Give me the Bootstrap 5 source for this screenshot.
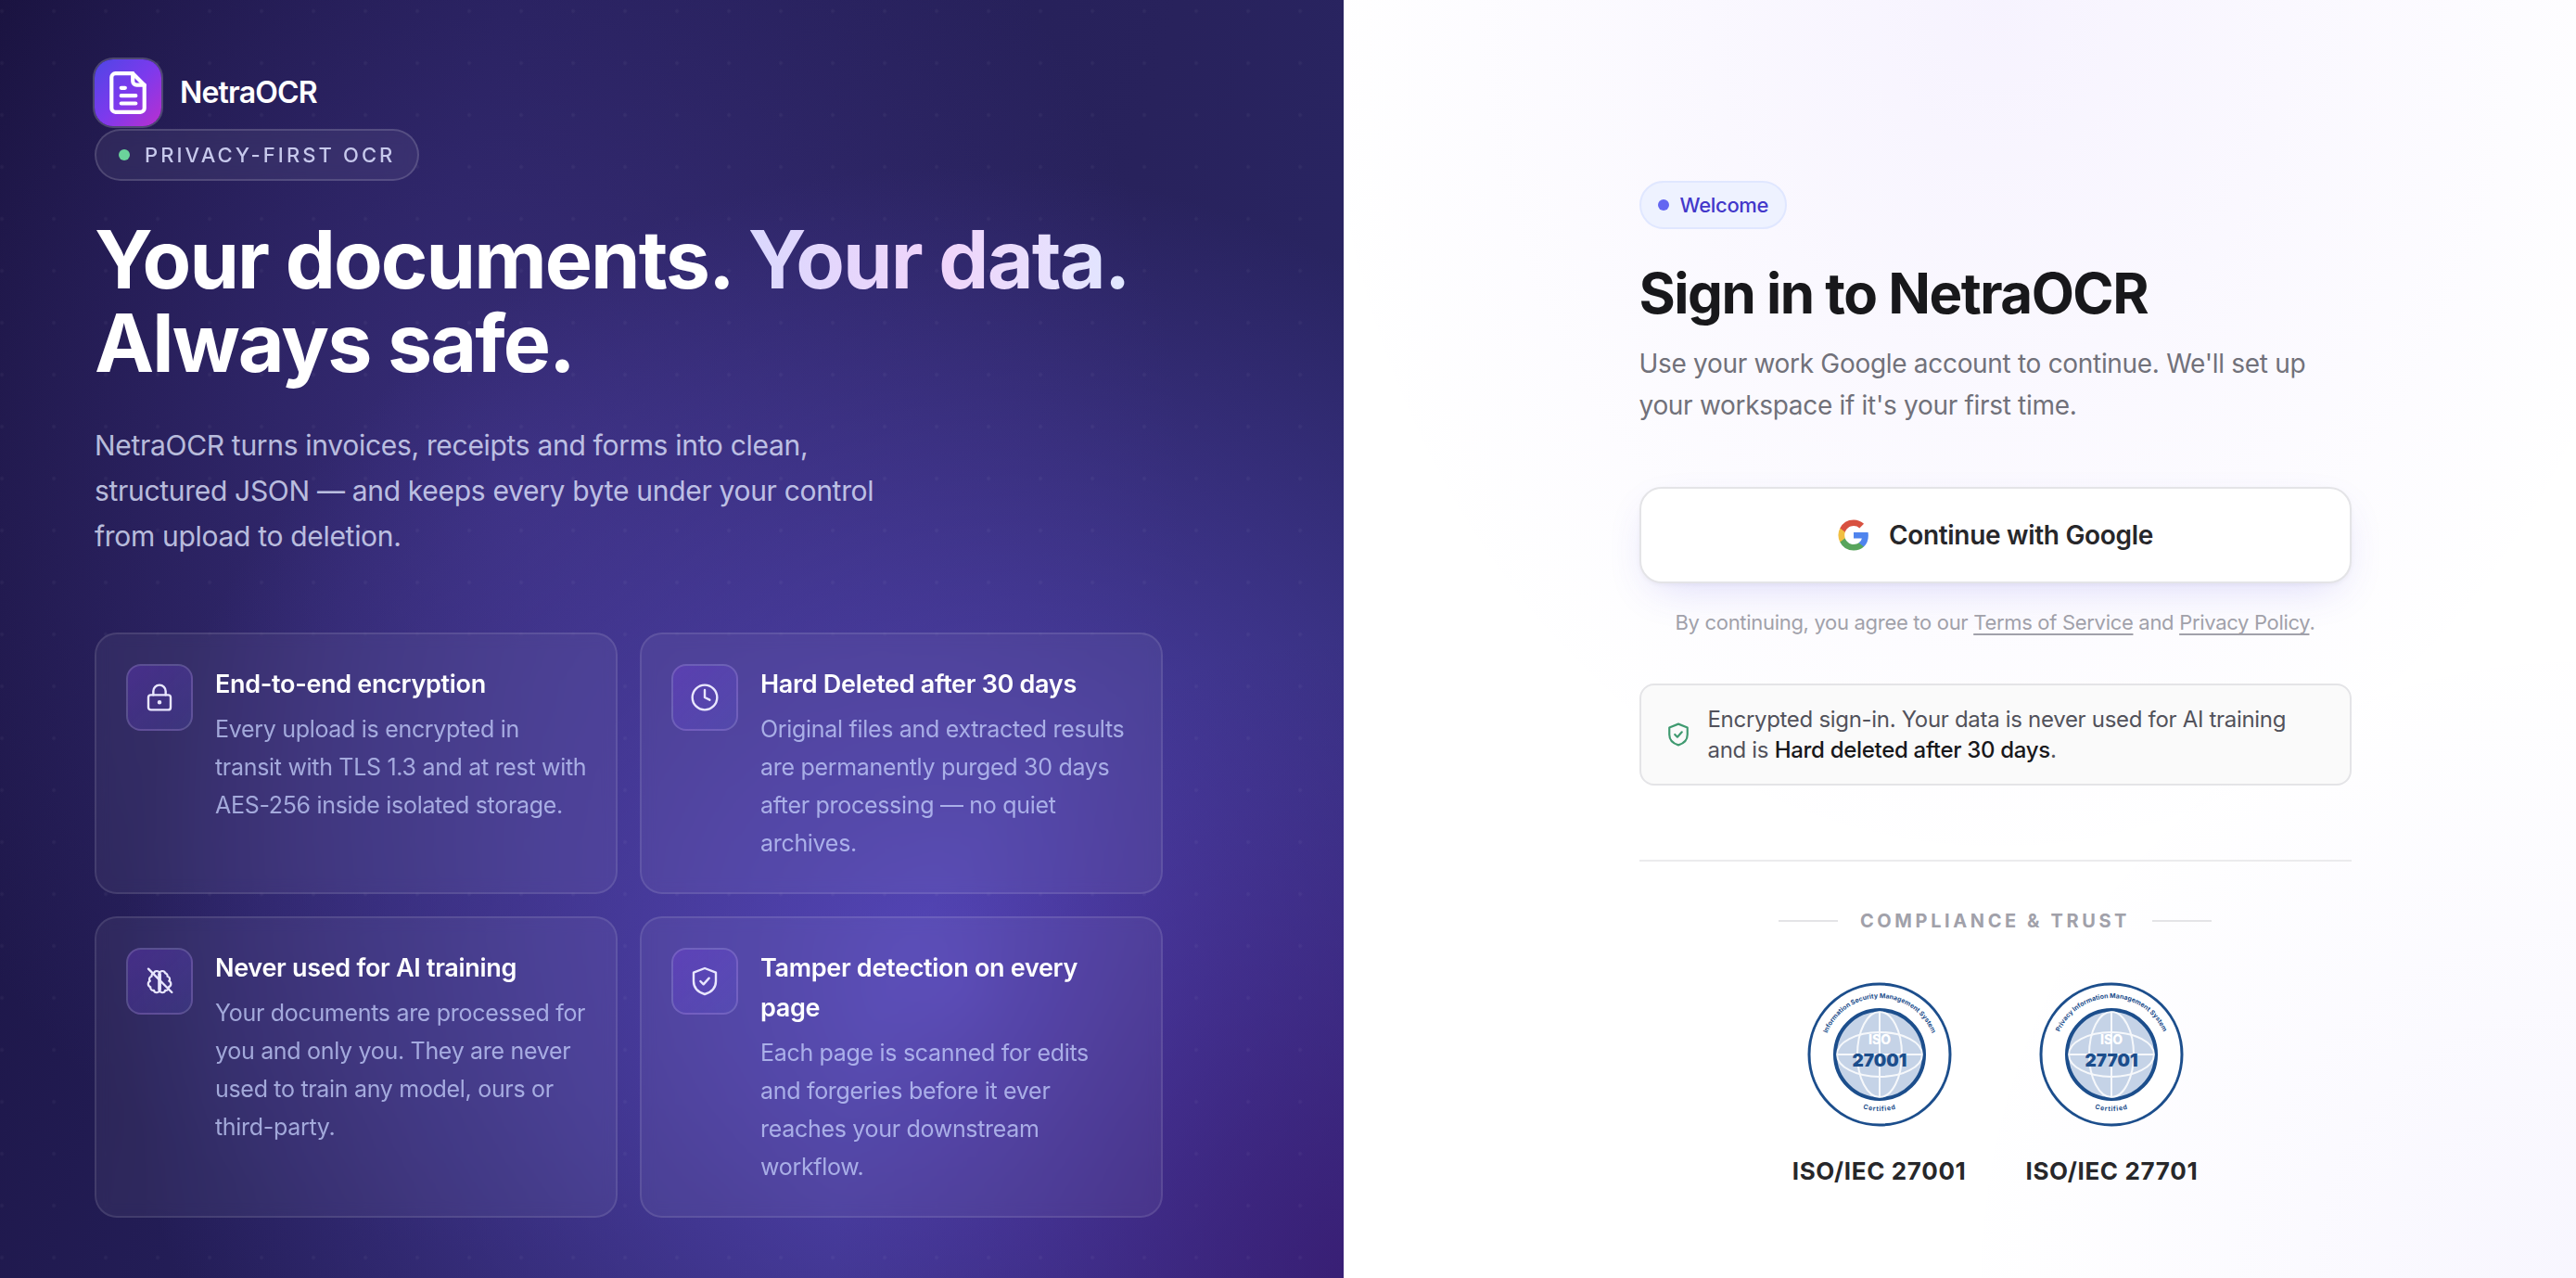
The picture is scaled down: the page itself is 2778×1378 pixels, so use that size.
<!DOCTYPE html>
<html lang="en">
<head>
<meta charset="utf-8">
<meta name="viewport" content="width=device-width, initial-scale=1">
<title>Sign in · NetraOCR</title>
<link href="https://cdn.jsdelivr.net/npm/bootstrap@5.3.0/dist/css/bootstrap.min.css" rel="stylesheet">
<style>
  body { font-family: Inter, "Liberation Sans", sans-serif; font-size: 28px; letter-spacing: -0.011em; background: #fff; color: #18181b; }
  .hero-panel {
    flex: 0 0 auto; width: 52.16%; padding: 64px 102px 48px; color: #fff;
    background:
      radial-gradient(circle at 2px 12px, rgba(255,255,255,.04) 1px, transparent 3px) 0 0 / 56px 56px,
      radial-gradient(38% 50% at 100% 100%, rgba(56,26,112,.8), transparent 100%),
      radial-gradient(62% 64% at 71% 77%, rgba(92,76,200,.86), transparent 100%),
      radial-gradient(50% 60% at 38% 38%, rgba(84,66,166,.42), transparent 100%),
      linear-gradient(105deg, #1a1340 0%, #231d56 30%, #28225c 70%, #2a2768 100%);
  }
  .hero-inner { max-width: 1152px; }
  .brand-row { gap: 20px; }
  .brand-tile { width: 72px; height: 72px; border-radius: 20px; background: linear-gradient(135deg, #4f46e5, #7c3aed 50%, #b92fcf); box-shadow: 0 0 0 2px rgba(255,255,255,.2); }
  .brand-word { font-size: 32px; line-height: 48px; font-weight: 600; letter-spacing: -0.025em; }
  .hero-pill { margin-top: 3px; height: 56px; padding: 0 24px; gap: 16px; border: 2px solid rgba(255,255,255,.15); background: rgba(255,255,255,.06); backdrop-filter: blur(8px); font-size: 22px; font-weight: 500; letter-spacing: .14em; color: #c7c9ec; }
  .dot { width: 12px; height: 12px; border-radius: 50%; }
  .dot-green { background: #6bd39b; }
  .dot-indigo { background: #6366f1; }
  .hero-title { font-size: 86px; line-height: 90px; font-weight: 700; letter-spacing: -0.022em; margin: 40px 0 0; }
  .hero-title em { font-style: normal; color: transparent; background: linear-gradient(90deg, #dad8fe, #f0d4fa 50%, #e0e7ff); -webkit-background-clip: text; background-clip: text; }
  .hero-copy { max-width: 896px; font-size: 30px; line-height: 49px; color: rgba(224,231,255,.8); margin: 41px 0 0; }
  .feature-grid { margin-top: 79px; display: grid; grid-template-columns: 1fr 1fr; gap: 24px; }
  .feature { padding: 32px 31px 32px 32px; gap: 24px; border: 2px solid rgba(255,255,255,.1); border-radius: 24px; background: rgba(255,255,255,.055); backdrop-filter: blur(8px); }
  .feature-tile { flex: none; width: 72px; height: 72px; border-radius: 16px; border: 2px solid rgba(255,255,255,.15); background: linear-gradient(135deg, rgba(124,58,237,.28), rgba(99,102,241,.14)); }
  .feature h2 { font-size: 27px; line-height: 43px; font-weight: 600; margin: 0 0 7px; }
  .feature p { font-size: 25px; line-height: 41px; margin: 0; color: rgba(199,210,254,.75); }
  .auth-panel {
    padding: 164px 32px 64px 108px;
    background:
      radial-gradient(56% 68% at 53% 0%, rgba(139,92,246,.075), transparent 100%),
      radial-gradient(50% 50% at 100% 100%, rgba(124,92,246,.055), transparent 100%), #fff;
  }
  .auth-inner { max-width: 768px; }
  .welcome-pill { height: 52px; padding: 0 18px; gap: 12px; border: 2px solid #e0e7ff; background: #eef2ff; color: #4338ca; font-size: 22px; font-weight: 500; }
  .auth-title { font-size: 60px; line-height: 72px; font-weight: 700; letter-spacing: -0.025em; margin: 33px 0 0; }
  .auth-copy { font-size: 28px; line-height: 45px; color: #71717a; margin: 18px 0 0; }
  .google-btn { height: 104px; gap: 20px; margin-top: 65px; border: 2px solid #e4e4e7; border-radius: 24px; background: #fff; color: #27272a; font-size: 28px; font-weight: 600; letter-spacing: inherit; box-shadow: 0 2px 4px rgba(24,24,27,.04), 0 16px 48px -16px rgba(79,70,229,.22); }
  .google-btn:hover { background: #fafafa; border-color: #d4d4d8; }
  .legal { font-size: 22px; line-height: 36px; color: #a1a1aa; margin: 24px 0 0; }
  .legal a { color: inherit; text-decoration: underline; text-decoration-thickness: 2px; text-underline-offset: 4px; text-decoration-skip-ink: none; }
  .notice { margin-top: 48px; padding: 20px 27px; gap: 19px; border: 2px solid #e4e4e7; border-radius: 16px; background: #fafafa; font-size: 24px; line-height: 33px; color: #52525b; }
  .notice strong { font-weight: 500; color: #18181b; }
  .trust { margin-top: 80px; border-top: 2px solid #ebebed; padding-top: 48px; }
  .trust-head { gap: 24px; font-size: 20px; line-height: 32px; font-weight: 700; letter-spacing: .18em; color: #a1a1aa; }
  .trust-head i { width: 64px; height: 2px; background: #e4e4e7; }
  .seals { gap: 64px; margin-top: 50px; }
  .seal-label { font-size: 26px; line-height: 40px; font-weight: 700; color: #27272a; margin-top: 28px; letter-spacing: .025em; }
  .seals text { fill: #1c4e8c; text-anchor: middle; letter-spacing: normal; }
  .seals .ring-copy { font-size: 7px; font-weight: 700; }
  .seals .ring-foot { font-size: 7px; font-weight: 700; letter-spacing: .1em; }
  .seals .seal-iso { font-size: 14px; font-weight: 800; fill: #fff; }
  .seals .seal-num { font-size: 19px; font-weight: 900; }
</style>
</head>
<body>
<div class="d-flex min-vh-100">
  <section class="hero-panel">
    <div class="hero-inner">
      <div class="brand-row d-flex align-items-center">
        <span class="brand-tile d-flex align-items-center justify-content-center">
          <svg width="50" height="50" viewBox="0 0 24 24" fill="none" stroke="#fff" stroke-width="2" stroke-linecap="round" stroke-linejoin="round" aria-hidden="true"><path d="M14.500 2H5.500a2 2 0 0 0-2 2v16a2 2 0 0 0 2 2h13a2 2 0 0 0 2-2V8Z"/><path d="M14.500 2v4a2 2 0 0 0 2 2h4"/><path d="M10.500 9.500H8.500M16 13.500H8.500M16 17.500H8.500"/></svg>
        </span>
        <span class="brand-word">NetraOCR</span>
      </div>
      <div class="hero-pill d-inline-flex align-items-center rounded-pill"><span class="dot dot-green"></span>PRIVACY-FIRST OCR</div>
      <h1 class="hero-title">Your documents. <em>Your data.</em><br>Always safe.</h1>
      <p class="hero-copy">NetraOCR turns invoices, receipts and forms into clean, structured JSON — and keeps every byte under your control from upload to deletion.</p>
      <div class="feature-grid">
        <article class="feature d-flex align-items-start">
          <span class="feature-tile d-flex align-items-center justify-content-center"><svg width="32" height="32" viewBox="0 0 24 24" fill="none" stroke="#e9e7ff" stroke-width="1.8" stroke-linecap="round" stroke-linejoin="round" aria-hidden="true"><circle cx="12" cy="16" r=".8"/><rect x="3" y="10" width="18" height="12" rx="2"/><path d="M7 10V7a5 5 0 0 1 10 0v3"/></svg></span>
          <div><h2>End-to-end encryption</h2><p>Every upload is encrypted in transit with TLS 1.3 and at rest with AES-256 inside isolated storage.</p></div>
        </article>
        <article class="feature d-flex align-items-start">
          <span class="feature-tile d-flex align-items-center justify-content-center"><svg width="32" height="32" viewBox="0 0 24 24" fill="none" stroke="#e9e7ff" stroke-width="1.8" stroke-linecap="round" stroke-linejoin="round" aria-hidden="true"><circle cx="12" cy="12" r="10"/><path d="M12 6v6l4 2"/></svg></span>
          <div><h2>Hard Deleted after 30 days</h2><p>Original files and extracted results are permanently purged 30 days after processing — no quiet archives.</p></div>
        </article>
        <article class="feature d-flex align-items-start">
          <span class="feature-tile d-flex align-items-center justify-content-center"><svg width="32" height="32" viewBox="0 0 24 24" fill="none" stroke="#e9e7ff" stroke-width="1.8" stroke-linecap="round" stroke-linejoin="round" aria-hidden="true"><g transform="translate(1 2) scale(.92 .87)"><path d="M9.500 2A2.500 2.500 0 0 1 12 4.500v15a2.500 2.500 0 0 1-4.960.44 2.500 2.500 0 0 1-2.960-3.080 3 3 0 0 1-.34-5.580 2.500 2.500 0 0 1 1.320-4.240 2.500 2.500 0 0 1 1.980-3A2.500 2.500 0 0 1 9.500 2Z"/><path d="M14.500 2A2.500 2.500 0 0 0 12 4.500v15a2.500 2.500 0 0 0 4.960.44 2.500 2.500 0 0 0 2.960-3.080 3 3 0 0 0 .34-5.580 2.500 2.500 0 0 0-1.320-4.240 2.500 2.500 0 0 0-1.980-3A2.500 2.500 0 0 0 14.500 2Z"/><path d="M12 5v14" stroke-width="3"/></g><path d="m3 2 19 19"/></svg></span>
          <div><h2>Never used for AI training</h2><p>Your documents are processed for you and only you. They are never used to train any model, ours or third-party.</p></div>
        </article>
        <article class="feature d-flex align-items-start">
          <span class="feature-tile d-flex align-items-center justify-content-center"><svg width="32" height="32" viewBox="0 0 24 24" fill="none" stroke="#e9e7ff" stroke-width="1.8" stroke-linecap="round" stroke-linejoin="round" aria-hidden="true"><path d="M12 1.500 3 5v7c0 5.500 4 9 9 10.500 5-1.500 9-5 9-10.500V5Z"/><path d="m8.500 12 2.500 2.500 4.500-5"/></svg></span>
          <div><h2>Tamper detection on every page</h2><p>Each page is scanned for edits and forgeries before it ever reaches your downstream workflow.</p></div>
        </article>
      </div>
    </div>
  </section>

  <main class="auth-panel flex-grow-1 d-flex align-items-center justify-content-center">
    <div class="auth-inner w-100">
      <div class="welcome-pill d-inline-flex align-items-center rounded-pill"><span class="dot dot-indigo"></span>Welcome</div>
      <h2 class="auth-title">Sign in to NetraOCR</h2>
      <p class="auth-copy">Use your work Google account to continue. We'll set up your workspace if it's your first time.</p>
      <button type="button" class="google-btn btn w-100 d-flex align-items-center justify-content-center">
        <svg width="36" height="36" viewBox="0 0 24 24" aria-hidden="true"><path fill="#4f84ee" d="M22.560 12.250c0-.78-.07-1.530-.2-2.250H12v4.260h5.920a5.060 5.060 0 0 1-2.200 3.320v2.770h3.570c2.080-1.920 3.270-4.740 3.270-8.100z"/><path fill="#58a55c" d="M12 23c2.970 0 5.460-.98 7.280-2.660l-3.570-2.770c-.98.66-2.230 1.060-3.710 1.060-2.860 0-5.290-1.930-6.160-4.530H2.180v2.840A11 11 0 0 0 12 23z"/><path fill="#f1bf42" d="M5.840 14.090a6.600 6.600 0 0 1 0-4.180V7.070H2.180a11 11 0 0 0 0 9.860l3.660-2.840z"/><path fill="#d85140" d="M12 5.380c1.620 0 3.060.56 4.210 1.640l3.150-3.150C17.450 2.090 14.970 1 12 1A11 11 0 0 0 2.180 7.070l3.660 2.840C6.710 7.310 9.140 5.380 12 5.380z"/></svg>
        Continue with Google
      </button>
      <p class="legal text-center">By continuing, you agree to our <a href="#terms">Terms of Service</a> and <a href="#privacy">Privacy Policy</a>.</p>
      <div class="notice d-flex align-items-center">
        <svg class="flex-shrink-0" width="26" height="26" viewBox="0 0 24 24" fill="none" stroke="#3f9a70" stroke-width="2" stroke-linecap="round" stroke-linejoin="round" aria-hidden="true"><path d="M12 1.500 3 5v7c0 5.500 4 9 9 10.500 5-1.500 9-5 9-10.500V5Z"/><path d="m8.500 12 2.500 2.500 4.500-5"/></svg>
        <div>Encrypted sign-in. Your data is never used for AI training and is <strong>Hard deleted after 30 days</strong>.</div>
      </div>
      <div class="trust">
        <div class="trust-head d-flex align-items-center justify-content-center"><i></i>COMPLIANCE &amp; TRUST<i></i></div>
        <div class="seals d-flex justify-content-center">
          <div class="d-flex flex-column align-items-center">
            <svg width="156" height="156" viewBox="0 0 156 156" role="img" aria-label="ISO 27001 seal">
              <defs><path id="arcTop" d="M17 78a61 61 0 0 1 122 0"/><path id="arcBottom" d="M17 78a61 61 0 0 0 122 0"/></defs>
              <circle cx="78" cy="78" r="76" fill="#fff" stroke="#1c4e8c" stroke-width="3"/>
              <circle cx="78" cy="78" r="48" fill="#c5d3e7" stroke="#1c4e8c" stroke-width="4"/>
              <g fill="none" stroke="#fff" stroke-width="2" opacity=".85"><path d="M78 32v92M32 78h92"/><ellipse cx="78" cy="78" rx="24" ry="46"/><ellipse cx="78" cy="78" rx="46" ry="24"/></g>
              <text class="ring-copy"><textPath href="#arcTop" startOffset="50%">Information Security Management System</textPath></text>
              <text class="ring-foot"><textPath href="#arcBottom" startOffset="50%">Certified</textPath></text>
              <text class="seal-iso" x="78" y="67">ISO</text>
              <text class="seal-num" x="78" y="91">27001</text>
            </svg>
            <div class="seal-label">ISO/IEC 27001</div>
          </div>
          <div class="d-flex flex-column align-items-center">
            <svg width="156" height="156" viewBox="0 0 156 156" role="img" aria-label="ISO 27701 seal">
              <circle cx="78" cy="78" r="76" fill="#fff" stroke="#1c4e8c" stroke-width="3"/>
              <circle cx="78" cy="78" r="48" fill="#c5d3e7" stroke="#1c4e8c" stroke-width="4"/>
              <g fill="none" stroke="#fff" stroke-width="2" opacity=".85"><path d="M78 32v92M32 78h92"/><ellipse cx="78" cy="78" rx="24" ry="46"/><ellipse cx="78" cy="78" rx="46" ry="24"/></g>
              <text class="ring-copy"><textPath href="#arcTop" startOffset="50%">Privacy Information Management System</textPath></text>
              <text class="ring-foot"><textPath href="#arcBottom" startOffset="50%">Certified</textPath></text>
              <text class="seal-iso" x="78" y="67">ISO</text>
              <text class="seal-num" x="78" y="91">27701</text>
            </svg>
            <div class="seal-label">ISO/IEC 27701</div>
          </div>
        </div>
      </div>
    </div>
  </main>
</div>
<script src="https://cdn.jsdelivr.net/npm/bootstrap@5.3.0/dist/js/bootstrap.bundle.min.js"></script>
</body>
</html>
